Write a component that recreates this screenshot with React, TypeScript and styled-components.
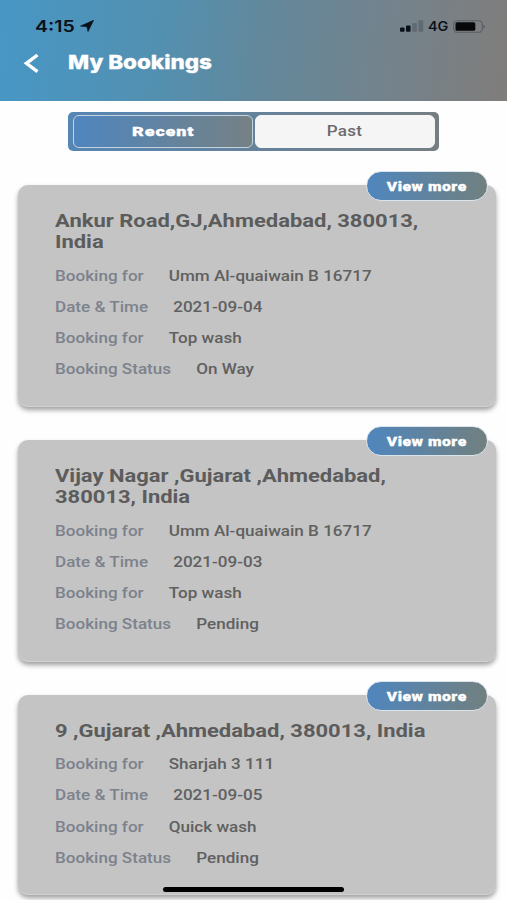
import React from 'react';
import styled, { createGlobalStyle } from 'styled-components';

const GlobalStyle = createGlobalStyle`
  * { box-sizing: border-box; }
  body {
    margin: 0;
    background: #fefefe;
    font-family: Roboto, "Liberation Sans", sans-serif;
    overflow: hidden;
  }
  h1, h2, p, dl, dt, dd { margin: 0; }
  button { font-family: inherit; padding: 0; cursor: pointer; }
`;

const Screen = styled.div`
  position: relative;
  width: 507px;
  height: 900px;
  overflow: hidden;
  background: #fefefe;
`;

const Wide = styled.span<{ $x?: number; $center?: boolean }>`
  display: inline-block;
  white-space: nowrap;
  transform: scaleX(${(p) => p.$x ?? 1.22});
  transform-origin: ${(p) => (p.$center ? 'center' : 'left')} center;
`;

const Header = styled.header`
  height: 101px;
  background: linear-gradient(96deg, #4797c6 0%, #5390b0 32%, #63889b 52%, #73838d 75%, #807d7b 100%);
`;

const StatusBar = styled.div`
  display: flex;
  justify-content: space-between;
  height: 44px;
  padding: 16px 21px 0 34.5px;
  color: #0a1118;
`;

const Clock = styled.div`
  display: flex;
  align-items: center;
  height: 20px;
  font: 600 16px/20px Inter, sans-serif;
`;

const ClockText = styled.div`
  width: 45px;
`;

const Indicators = styled.div`
  display: flex;
  align-items: center;
  height: 20px;
  font: 600 12.5px/20px Inter, sans-serif;
`;

const Network = styled.div`
  width: 25px;
  margin-left: 4px;
  padding-top: 1px;
`;

const TitleBar = styled.div`
  display: flex;
  align-items: center;
  height: 37px;
  padding-left: 23px;
`;

const BackButton = styled.button`
  display: flex;
  width: 45px;
  border: 0;
  background: none;
`;

const Title = styled.h1`
  font-family: Inter, sans-serif;
  font-size: 19px;
  line-height: 26px;
  font-weight: 800;
  color: #fff;
  -webkit-text-stroke: 0.3px #fff;
`;

const Tabs = styled.div`
  display: grid;
  grid-template-columns: 180px 180px;
  gap: 2px;
  width: 371px;
  height: 39px;
  margin: 11px 0 0 68px;
  padding: 3px 5px;
  border-radius: 5px;
  background: linear-gradient(90deg, #5686b4, #757e82);
`;

const Tab = styled.button<{ $active?: boolean }>`
  height: 33px;
  border: 1.5px solid ${(p) => (p.$active ? '#c3d3e0' : '#f5f5f5')};
  border-radius: 6px;
  background: ${(p) => (p.$active ? 'linear-gradient(90deg, #4f86be, #758184)' : '#f5f5f5')};
  color: ${(p) => (p.$active ? '#fff' : '#6b6b6b')};
  font-size: ${(p) => (p.$active ? 13.5 : 14)}px;
  line-height: 28px;
  padding-bottom: 1px;
  font-weight: ${(p) => (p.$active ? 900 : 500)};
  letter-spacing: ${(p) => (p.$active ? 0.6 : 0.2)}px;
  -webkit-text-stroke: ${(p) => (p.$active ? '0.3px #fff' : '0')};
`;

const List = styled.main`
  display: flex;
  flex-direction: column;
  gap: 33px;
  padding: 34px 11px 0 18px;
`;

const Card = styled.article<{ $short?: boolean }>`
  position: relative;
  flex: none;
  height: ${(p) => (p.$short ? 200 : 222)}px;
  padding: 25px 0 0 37px;
  border-radius: 10px;
  background: #c4c4c4;
  box-shadow: 0 3px 5px rgba(0, 0, 0, 0.38), inset 0 -1px 0 #d2d2d2;
`;

const MoreButton = styled.button`
  position: absolute;
  top: -14px;
  right: 8px;
  width: 122px;
  height: 30px;
  border: 1.5px solid #dce4eb;
  border-radius: 15px;
  background: linear-gradient(90deg, #4f86be, #71807f) border-box;
  color: #fff;
  font-size: 12.5px;
  font-weight: 900;
  letter-spacing: 0.4px;
  -webkit-text-stroke: 0.3px #fff;
`;

const Address = styled.h2`
  font-size: 18px;
  line-height: 21.3px;
  font-weight: 700;
  color: #5c5c5c;
`;

const Details = styled.dl`
  padding-top: 7.4px;
`;

const Row = styled.div`
  display: flex;
  gap: 20.6px;
  width: max-content;
  height: 31.2px;
  align-items: center;
  font-size: 14px;
  font-weight: 500;
  transform: scaleX(1.22);
  transform-origin: left center;
`;

const Label = styled.dt`
  color: #7c828c;
`;

const Value = styled.dd`
  color: #606060;
`;

const HomeIndicator = styled.div`
  position: absolute;
  left: 163px;
  bottom: 8px;
  width: 181px;
  height: 5px;
  border-radius: 3px;
  background: #000;
`;

interface Booking {
  address: string[];
  place: string;
  date: string;
  service: string;
  status: string;
}

const bookings: Booking[] = [
  { address: ['Ankur Road,GJ,Ahmedabad, 380013,', 'India'], place: 'Umm Al-quaiwain B 16717', date: '2021-09-04', service: 'Top wash', status: 'On Way' },
  { address: ['Vijay Nagar ,Gujarat ,Ahmedabad,', '380013, India'], place: 'Umm Al-quaiwain B 16717', date: '2021-09-03', service: 'Top wash', status: 'Pending' },
  { address: ['9 ,Gujarat ,Ahmedabad, 380013, India'], place: 'Sharjah 3 111', date: '2021-09-05', service: 'Quick wash', status: 'Pending' },
];

function BookingCard({ booking }: { booking: Booking }) {
  const rows = [
    ['Booking for', booking.place],
    ['Date & Time', booking.date],
    ['Booking for', booking.service],
    ['Booking Status', booking.status],
  ];
  return (
    <Card $short={booking.address.length === 1}>
      <MoreButton><Wide $center $x={1.26}>View more</Wide></MoreButton>
      <Address>
        {booking.address.map((line) => (
          <div key={line}><Wide>{line}</Wide></div>
        ))}
      </Address>
      <Details>
        {rows.map(([label, value], i) => (
          <Row key={i}><Label>{label}</Label><Value>{value}</Value></Row>
        ))}
      </Details>
    </Card>
  );
}

export default function App() {
  return (
    <Screen>
      <GlobalStyle />
      <Header>
        <StatusBar>
          <Clock>
            <ClockText><Wide>4:15</Wide></ClockText>
            <svg width="14" height="12" viewBox="0 0 14 12">
              <path d="M13.6 0.3 L8 11.6 L7 6.8 L0.5 6.1 Z" fill="currentColor" stroke="currentColor" strokeWidth="0.6" strokeLinejoin="round" />
            </svg>
          </Clock>
          <Indicators>
            <svg width="24" height="12" viewBox="0 0 24 12">
              <rect x="0" y="7.6" width="4.6" height="4.2" rx="1" fill="#0a1118" />
              <rect x="6" y="5.4" width="4.6" height="6.4" rx="1" fill="#0a1118" />
              <rect x="12.3" y="3" width="4.6" height="8.8" rx="1" fill="#5f6a72" />
              <rect x="18.4" y="0.2" width="4.8" height="11.6" rx="1" fill="#5f6a72" />
            </svg>
            <Network><Wide $x={1.15}>4G</Wide></Network>
            <svg width="33" height="13" viewBox="0 0 33 13">
              <rect x="0.7" y="0.7" width="28.6" height="11.6" rx="3.6" fill="none" stroke="#595d61" strokeWidth="1.1" />
              <rect x="2.5" y="2.2" width="19.8" height="8.6" rx="1.6" fill="#060809" />
              <path d="M30.5 4.2 Q33.2 6.5 30.5 8.8 Z" fill="#595d61" />
            </svg>
          </Indicators>
        </StatusBar>
        <TitleBar>
          <BackButton aria-label="Back">
            <svg width="17" height="20" viewBox="0 0 17 20">
              <path d="M14.5 2 L3.4 10.3 L14.5 18.6" fill="none" stroke="#fff" strokeWidth="3.4" />
            </svg>
          </BackButton>
          <Title><Wide $x={1.18}>My Bookings</Wide></Title>
        </TitleBar>
      </Header>
      <Tabs>
        <Tab $active><Wide $center $x={1.34}>Recent</Wide></Tab>
        <Tab><Wide $center>Past</Wide></Tab>
      </Tabs>
      <List>
        {bookings.map((b) => (
          <BookingCard key={b.address[0]} booking={b} />
        ))}
      </List>
      <HomeIndicator />
    </Screen>
  );
}
